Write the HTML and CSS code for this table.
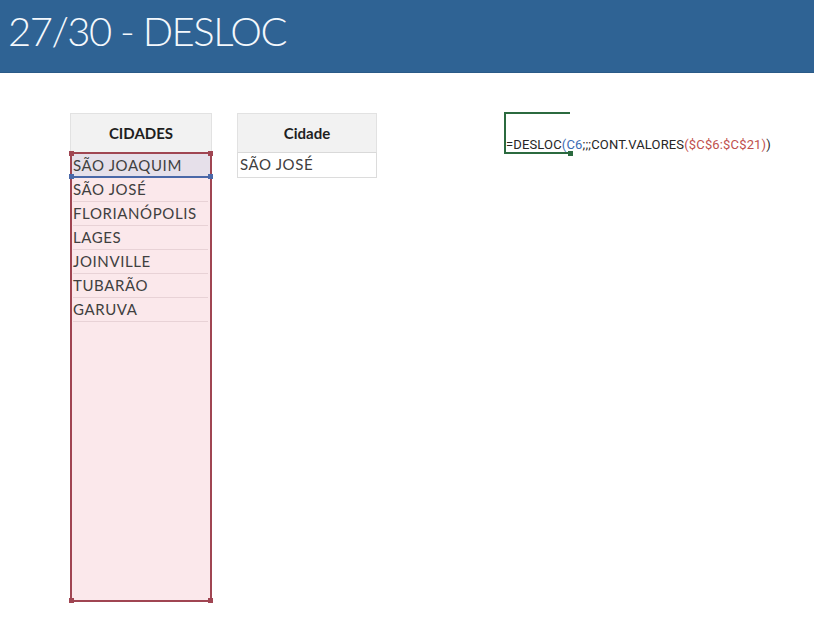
FILE: index.html
```html
<!DOCTYPE html>
<html lang="pt">
<head>
<meta charset="utf-8">
<title>27/30 - DESLOC</title>
<link rel="stylesheet" href="styles.css">
</head>
<body>
<header class="banner">
  <h1 class="title">27/30 - DESLOC</h1>
</header>
<main class="sheet">
  <section class="table cidades">
    <div class="th">CIDADES</div>
    <div class="selection">
      <div class="row active">SÃO JOAQUIM</div>
      <div class="row">SÃO JOSÉ</div>
      <div class="row">FLORIANÓPOLIS</div>
      <div class="row">LAGES</div>
      <div class="row">JOINVILLE</div>
      <div class="row">TUBARÃO</div>
      <div class="row">GARUVA</div>
      <span class="handle h-tl"></span>
      <span class="handle h-tr"></span>
      <span class="handle h-bl"></span>
      <span class="handle h-br"></span>
      <span class="handle blue h-ml"></span>
      <span class="handle blue h-mr"></span>
    </div>
  </section>
  <section class="table cidade">
    <div class="th">Cidade</div>
    <div class="cell">SÃO JOSÉ</div>
  </section>
  <section class="formula">
    <div class="fbox"></div>
    <div class="ftext">=DESLOC<span class="b">(C6</span>;;;CONT.VALORES<span class="r">($C$6:$C$21)</span>)</div>
  </section>
</main>
</body>
</html>
```
FILE: styles.css
```css
* { box-sizing: border-box; }
html, body { margin: 0; padding: 0; background: #ffffff; }
body { font-family: "Lato", "DejaVu Sans", sans-serif; color: #3a3a3a; width: 814px; height: 620px; overflow: hidden; }

.banner { height: 73px; background: #2f6394; border-bottom: 1px solid #2a5a87; display: flex; align-items: flex-start; padding: 9px 0 0 8px; }
.title { margin: 0; font-family: "Lato", "DejaVu Sans", sans-serif; font-weight: 300; font-size: 40px; line-height: 44px; color: #f4f8fc; letter-spacing: -1.5px; }

.sheet { display: flex; align-items: flex-start; padding: 40px 0 0 70px; }

.table .th { height: 40px; background: #f2f2f2; border: 1px solid #e2e2e2; border-bottom: 1px solid #d9d9d9; display: flex; align-items: center; justify-content: center; font-weight: 700; font-size: 15px; color: #1f1f1f; }

.cidades { width: 142px; }
.selection { position: relative; height: 450px; background: #fbe8eb; border: 2px solid #a04552; margin-top: -1px; padding: 0 2px 0 1px; }
.row { height: 24px; line-height: 23px; font-size: 15px; letter-spacing: 0.6px; border-bottom: 1px solid #e8d2d6; padding-left: 0; color: #404040; white-space: nowrap; }
.row.active { background: #e6e0ea; border-bottom: 2px solid #4a68a8; margin: 0 -2px 0 -1px; padding-left: 1px; }
.handle { position: absolute; width: 5px; height: 5px; background: #a04552; }
.handle.blue { background: #4a68a8; }
.h-tl { left: -3px; top: -3px; }
.h-tr { right: -3px; top: -3px; }
.h-bl { left: -3px; bottom: -3px; }
.h-br { right: -3px; bottom: -3px; }
.h-ml { left: -3px; top: 20px; }
.h-mr { right: -3px; top: 20px; }

.cidade { width: 140px; margin-left: 25px; }
.cell { height: 25px; border: 1px solid #dcdcdc; border-top: none; font-size: 15px; letter-spacing: 0.6px; line-height: 23px; padding-left: 2px; color: #404040; }

.formula { position: relative; margin-left: 127px; margin-top: -1px; width: 300px; height: 43px; }
.fbox { position: absolute; left: 0; top: 0; width: 66px; height: 42px; border: 2px solid #2b6a3f; border-right: none; }
.fbox::after { content: ""; position: absolute; right: -3px; bottom: -4px; width: 5px; height: 5px; background: #2b6a3f; }
.ftext { position: absolute; left: 2px; top: 25px; font-family: "Roboto", "Liberation Sans", sans-serif; font-size: 13px; line-height: 16px; color: #262626; white-space: nowrap; letter-spacing: 0.15px; }
.ftext .b { color: #3c6cb4; }
.ftext .r { color: #c0504d; }
```
